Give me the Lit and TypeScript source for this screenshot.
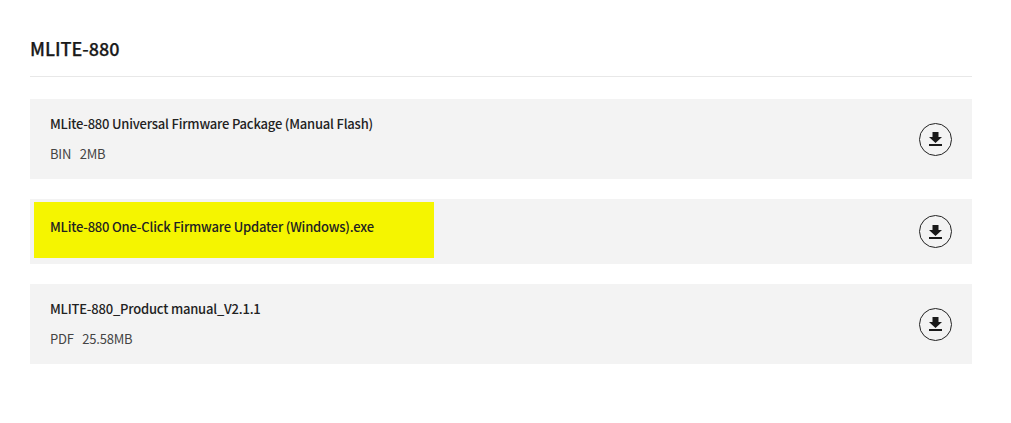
import { LitElement, html, css } from 'lit';
import { customElement } from 'lit/decorators.js';

const files = [
  { name: 'MLite-880 Universal Firmware Package (Manual Flash)', type: 'BIN', size: '2MB' },
  { name: 'MLite-880 One-Click Firmware Updater (Windows).exe', marked: true },
  { name: 'MLITE-880_Product manual_V2.1.1', type: 'PDF', size: '25.58MB' },
];

@customElement('app-root')
export class AppRoot extends LitElement {
  static styles = css`
    :host {
      display: block;
      height: 423px;
      background: #fff;
      padding: 35px 39px 0 30px;
      box-sizing: border-box;
      font-family: 'Noto Sans CJK KR', 'Noto Sans', sans-serif;
      color: #222;
      overflow: hidden;
    }

    h2 {
      margin: 0;
      height: 41px;
      line-height: 26px;
      font-size: 18px;
      font-weight: 500;
      color: #1a1a1a;
      -webkit-text-stroke: 0.25px #1a1a1a;
      border-bottom: 1px solid #e8e8e8;
    }

    .list {
      display: flex;
      flex-direction: column;
      gap: 20px;
      margin-top: 22px;
    }

    .file {
      position: relative;
      display: flex;
      align-items: center;
      justify-content: space-between;
      height: 80px;
      padding: 0 20px;
      background: #f3f3f3;
      letter-spacing: -0.2px;
    }

    .file.marked {
      height: 65px;
    }

    .marker {
      position: absolute;
      left: 4px;
      top: 3px;
      width: 400px;
      height: 56px;
      background: #f5f500;
    }

    .info {
      position: relative;
      margin-top: -1px;
    }

    .marked .info {
      margin-top: -10px;
    }

    .name {
      font-size: 13px;
      line-height: 20px;
      font-weight: 500;
    }

    .meta {
      display: flex;
      gap: 8.500px;
      margin-top: 10px;
      font-size: 13px;
      line-height: 20px;
      color: #444;
    }

    .down {
      display: flex;
      align-items: center;
      justify-content: center;
      width: 31px;
      height: 31px;
      border: 1px solid #222;
      border-radius: 50%;
    }
  `;

  render() {
    return html`
      <h2>MLITE-880</h2>
      <div class="list">
        ${files.map(
          (f) => html`
            <div class="file ${f.marked ? 'marked' : ''}">
              ${f.marked ? html`<div class="marker"></div>` : ''}
              <div class="info">
                <div class="name">${f.name}</div>
                ${f.type
                  ? html`<div class="meta"><span>${f.type}</span><span>${f.size}</span></div>`
                  : ''}
              </div>
              <div class="down">
                <svg width="13" height="14" viewBox="0 0 13 14" fill="#1a1a1a">
                  <path d="M3.500 0h6v5H13l-6.500 6L0 5h3.500z" />
                  <rect y="12" width="13" height="2" />
                </svg>
              </div>
            </div>
          `
        )}
      </div>
    `;
  }
}
